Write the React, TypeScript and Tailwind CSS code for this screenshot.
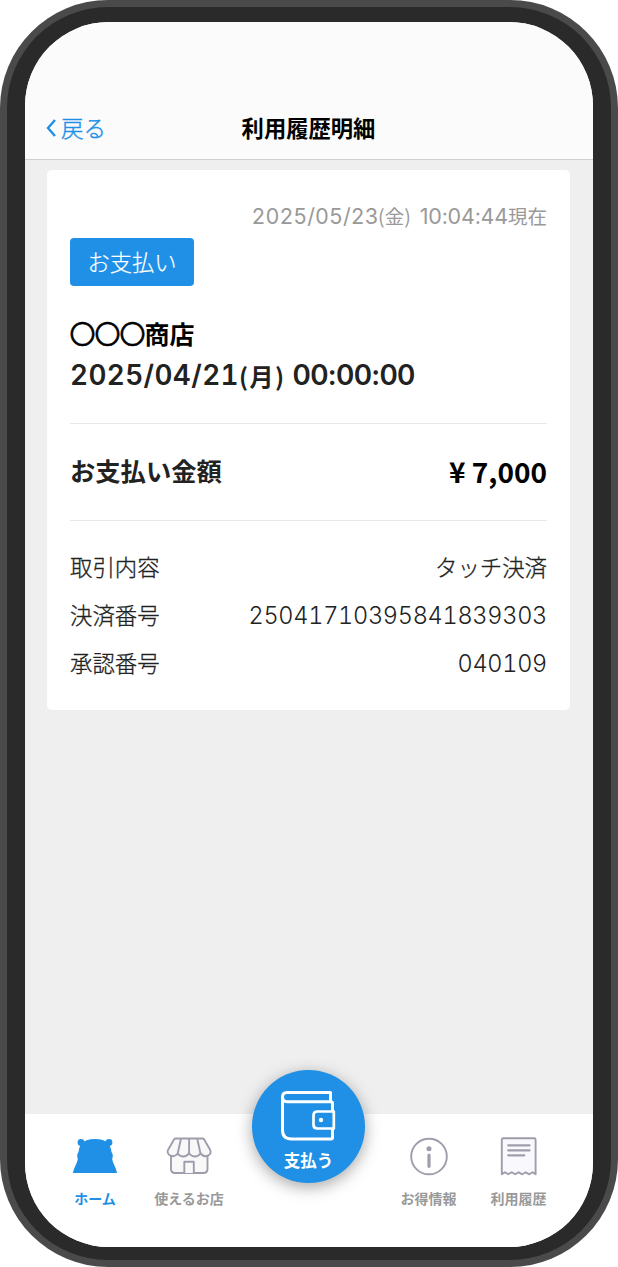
import React from 'react';

interface DetailRow {
    label: string;
    value: string;
    numeric?: boolean;
}

const details: DetailRow[] = [
    { label: '取引内容', value: 'タッチ決済' },
    { label: '決済番号', value: '25041710395841839303', numeric: true },
    { label: '承認番号', value: '040109', numeric: true },
];

const HomeIcon: React.FC = () => (
    <svg width="46" height="40" viewBox="0 0 46 40" fill="#1f90e6">
        <circle cx="9" cy="6.500" r="3.400" />
        <circle cx="37" cy="6.500" r="3.400" />
        <path d="M10 7C13 4.500 17 3.100 23 3.100S33 4.500 36 7C38 9.500 39 12 39.500 16C41 17.500 41.200 20.500 40.200 23C41 28 44 31 45 37H1C2 31 5 28 5.800 23C4.800 20.500 5 17.500 6.500 16C7 12 8 9.500 10 7Z" />
    </svg>
);

const ShopIcon: React.FC = () => (
    <svg width="46" height="40" viewBox="0 0 46 40" fill="#f8f8f9" stroke="#9f9dab" strokeWidth="1.900" strokeLinejoin="round">
        <path d="M5 18V33Q5 37 9 37H37.500Q41.500 37 41.500 33V18" />
        <path d="M18.300 37V25.700H27.800V37" />
        <path d="M9.700 2.500H36.500Q37.600 2.500 38.200 3.500L44.200 14C46 19 39.500 23 34.500 17.500C31.500 21.500 26.500 21.500 23.100 17.500C19.500 21.500 14.500 21.500 11.700 17.500C7.500 23 0 19 2 14L8 3.500Q8.600 2.500 9.700 2.500Z" />
        <path d="M15 2.500L11.700 17.500M23.100 2.500V17.500M31.200 2.500L34.500 17.500" fill="none" />
    </svg>
);

const InfoIcon: React.FC = () => (
    <svg width="46" height="40" viewBox="0 0 46 40" fill="none" stroke="#9f9dab">
        <circle cx="23" cy="20.500" r="17.800" strokeWidth="1.900" />
        <circle cx="23" cy="12.800" r="2.500" fill="#9f9dab" stroke="none" />
        <path d="M23 19V30.300" strokeWidth="3.200" strokeLinecap="round" />
    </svg>
);

const ReceiptIcon: React.FC = () => (
    <svg width="46" height="40" viewBox="0 0 46 40" fill="#f9f9fd" stroke="#9f9dab" strokeWidth="1.900" strokeLinejoin="round" strokeLinecap="round">
        <path d="M5.800 38.300V3.800Q5.800 2.300 7.300 2.300H38.100Q39.600 2.300 39.600 3.800V38.300L36.500 36.300L33.300 38.300L29.700 36.300L26.300 38.300L22.700 36.300L19.200 38.300L15.700 36.300L12.200 38.300L9 36.300Z" />
        <path d="M12.200 9.300H33.600M12.200 14.300H33.600M12.200 19.300H28.300" strokeWidth="2.200" />
    </svg>
);

const WalletIcon: React.FC = () => (
    <svg width="56" height="52" viewBox="1.500 0 56 52" fill="none" stroke="#fff" strokeWidth="3" strokeLinejoin="round">
        <path d="M51 11V2.500H7.500Q3 2.500 3 7T7.500 11.700H51.500Q53 11.700 53 13.500V21.500" />
        <path d="M3 7V40Q3 49 12 49H51.500Q53 49 53 47.500V39" />
        <path d="M54.300 21.500H38Q34 21.500 34 25.500V35Q34 38.500 38 38.500H54.300Z" strokeWidth="2.700" />
        <circle cx="41.500" cy="30" r="2.200" fill="#fff" stroke="none" />
    </svg>
);

interface TabProps {
    label: string;
    icon: React.ReactNode;
    active?: boolean;
    className?: string;
}

const Tab: React.FC<TabProps> = ({ label, icon, active, className }) => (
    <button className={`flex shrink-0 flex-col items-center pt-[22px] ${className ?? ''}`}>
        {icon}
        <span className={`mt-[11px] whitespace-nowrap text-[14px] leading-[22px] font-bold ${active ? 'text-[#1f90e6]' : 'text-[#999]'}`}>
            {label}
        </span>
    </button>
);

const App: React.FC = () => {
    return (
        <div className="h-[1267px] w-[618px] bg-white font-['Noto_Sans_CJK_JP',sans-serif]">
            <div className="h-[1267px] w-[617.500px] rounded-[108px] bg-[#4a4a4a] p-[7px]">
                <div className="h-[1253px] rounded-[101px] bg-[#2a2a2a] px-[17.500px] pt-[15px]">
                    <div className="flex h-[1225px] w-[568px] flex-col overflow-hidden rounded-[84px] bg-[#efefef]">
                        <header className="relative h-[138px] shrink-0 border-b border-[#d0d0d0] bg-[#fbfbfb] pt-[87px]">
                            <h1 className="text-center text-[22.300px] leading-9 font-bold text-black">利用履歴明細</h1>
                            <button className="absolute top-[87px] left-[21.500px] flex items-center text-[22.500px] leading-9 font-light text-[#1f90e6] [-webkit-text-stroke:0.4px_#1f90e6]">
                                <svg width="10" height="20" viewBox="0 0 10 20" fill="none" stroke="#1f90e6" strokeWidth="2.400" className="mt-px mr-[5px]">
                                    <path d="M9 2L2 10L9 18" />
                                </svg>
                                戻る
                            </button>
                        </header>

                        <main className="grow px-[22.500px] pt-[10px]">
                            <section className="h-[540px] rounded-[5px] bg-white px-[23px] pt-[31px]">
                                <p className="flex h-[30px] justify-end text-[19.500px] leading-[30px] whitespace-nowrap text-[#999]">
                                    <span className="font-['Inter'] text-[21.500px] tabular-nums">2025/05/23</span>
                                    <span className="ml-[-0.500px]">(金)</span>
                                    <span className="ml-[9px] font-['Inter'] text-[21.500px] tracking-[-0.010em]">10:04:44</span>
                                    <span>現在</span>
                                </p>
                                <div className="mt-[7px] flex h-12 w-[124px] items-center justify-center rounded-[4px] bg-[#1f90e6] pb-px text-[22.300px] font-light text-white [-webkit-text-stroke:0.2px_#fff]">
                                    お支払い
                                </div>
                                <p className="mt-[26px] text-[25px] leading-[41px] font-bold text-black">
                                    <span className="-ml-[0.500px] text-[26px] tracking-[-1px] font-normal [-webkit-text-stroke:0.5px_#000]">〇〇〇</span>商店
                                </p>
                                <p className="flex pt-px text-[25px] leading-[41px] font-bold whitespace-nowrap text-[#222]">
                                    <span className="font-['Inter'] text-[27.800px] tracking-[0.400px] font-semibold tabular-nums">2025/04/21</span>
                                    <span className="text-[24px] tracking-[1.500px]">(月)</span>
                                    <span className="ml-[7px] font-['Inter'] text-[27.800px] tracking-[-0.700px] font-semibold">00:00:00</span>
                                </p>
                                <div className="mt-[27px] flex h-[98px] items-center justify-between border-y-[1.500px] border-[#e8e8e8] pb-[2px]">
                                    <span className="text-[25.300px] font-bold text-[#222]">お支払い金額</span>
                                    <span className="pb-px text-[28px] font-bold text-black">¥ 7,000</span>
                                </div>
                                <dl className="mt-[23px]">
                                    {details.map((row) => (
                                        <div key={row.label} className="flex h-12 items-center justify-between text-[22.400px] text-[#222]">
                                            <dt className="pb-[2px] font-light [-webkit-text-stroke:0.3px_#222]">{row.label}</dt>
                                            <dd className={row.numeric ? "font-['Inter'] text-[23.500px] tracking-[-0.280px] font-[350] tabular-nums" : 'pb-[2px] font-light [-webkit-text-stroke:0.3px_#222]'}>
                                                {row.value}
                                            </dd>
                                        </div>
                                    ))}
                                </dl>
                            </section>
                        </main>

                        <nav className="relative flex h-[133px] shrink-0 bg-white">
                            <Tab label="ホーム" icon={<HomeIcon />} active className="ml-[35.500px] w-[70px]" />
                            <Tab label="使えるお店" icon={<ShopIcon />} className="ml-[14px] w-[90px]" />
                            <Tab label="お得情報" icon={<InfoIcon />} className="ml-[149.500px] w-[90px]" />
                            <Tab label="利用履歴" icon={<ReceiptIcon />} className="w-[90px]" />
                            <button className="absolute -top-[44px] left-[227.500px] flex size-[113px] flex-col items-center rounded-full bg-[#1f90e6] pt-[19.500px] shadow-[0_4px_16px_rgba(0,0,0,0.35)]">
                                <WalletIcon />
                                <span className="mt-[6px] text-[16.500px] leading-[24px] font-bold text-white">支払う</span>
                            </button>
                        </nav>
                    </div>
                </div>
            </div>
        </div>
    );
};

export default App;
